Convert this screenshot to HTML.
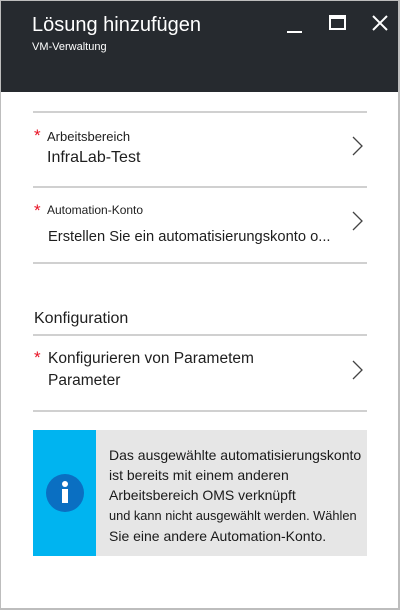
<!DOCTYPE html>
<html><head><meta charset="utf-8"><style>
*{margin:0;padding:0;box-sizing:border-box}
body{width:400px;height:610px;background:#fff;font-family:"Liberation Sans",sans-serif;position:relative;overflow:hidden}
.frame{position:absolute;left:0;top:0;width:400px;height:610px;border:1px solid #bdbdbd;border-right:2px solid #bdbdbd;border-bottom:2px solid #bdbdbd}
.hdr{position:absolute;left:1px;top:1px;width:397px;height:91px;background:#262a2f}
.t{position:absolute;color:#fff}
.line{position:absolute;left:33px;width:334px;height:2px;background:#d0d0d0}
.a{position:absolute;color:#e81123;font-size:17px}
.tx{position:absolute;color:#1e1e1e;white-space:nowrap}
.chev{position:absolute;left:352px;width:12px;height:20px}
</style></head><body>
<div class="frame"></div>
<div class="hdr"></div>
<div class="t" style="left:32px;top:14px;font-size:20px">Lösung hinzufügen</div>
<div class="t" style="left:32px;top:41px;font-size:11px">VM-Verwaltung</div>
<div style="position:absolute;left:287px;top:31px;width:15px;height:2px;background:#fff"></div>
<div style="position:absolute;left:329px;top:15px;width:17px;height:15px;border:2px solid #fff;border-top-width:4px"></div>
<svg style="position:absolute;left:372px;top:15px" width="16" height="16"><path d="M1 1L15 15M15 1L1 15" stroke="#fff" stroke-width="2"/></svg>
<div class="line" style="top:111px"></div>
<div class="a" style="left:34px;top:126px">*</div>
<div class="tx" style="left:47px;top:129px;font-size:13px">Arbeitsbereich</div>
<div class="tx" style="left:47px;top:149px;font-size:16px">InfraLab-Test</div>
<svg class="chev" style="top:136px"><path d="M1 1L10 10L1 19" fill="none" stroke="#444" stroke-width="1.3"/></svg>
<div class="line" style="top:186px"></div>
<div class="a" style="left:34px;top:201px">*</div>
<div class="tx" style="left:47px;top:203px;font-size:12px">Automation-Konto</div>
<div class="tx" style="left:48px;top:229px;font-size:14.7px">Erstellen Sie ein automatisierungskonto o...</div>
<svg class="chev" style="top:211px"><path d="M1 1L10 10L1 19" fill="none" stroke="#444" stroke-width="1.3"/></svg>
<div class="line" style="top:262px"></div>
<div class="tx" style="left:34px;top:310px;font-size:16px">Konfiguration</div>
<div class="line" style="top:334px"></div>
<div class="a" style="left:34px;top:348px">*</div>
<div class="tx" style="left:48px;top:350px;font-size:15.5px">Konfigurieren von Parametem</div>
<div class="tx" style="left:48px;top:372px;font-size:15.5px">Parameter</div>
<svg class="chev" style="top:360px"><path d="M1 1L10 10L1 19" fill="none" stroke="#444" stroke-width="1.3"/></svg>
<div class="line" style="top:410px"></div>
<div style="position:absolute;left:33px;top:430px;width:334px;height:126px;background:#e6e6e6"></div>
<div style="position:absolute;left:33px;top:430px;width:63px;height:126px;background:#00b4f0"></div>
<svg style="position:absolute;left:46px;top:474px" width="38" height="38"><circle cx="19" cy="19" r="19" fill="#0a6fc2"/><circle cx="19" cy="10" r="3" fill="#fff"/><rect x="16" y="15" width="6" height="14" fill="#fff"/></svg>
<div class="tx" style="left:109px;top:445px;font-size:14px;line-height:20px;color:#1a1a1a">Das ausgewählte automatisierungskonto<br>ist bereits mit einem anderen<br>Arbeitsbereich OMS verknüpft<br><span style="font-size:12.8px">und kann nicht ausgewählt werden. Wählen</span><br>Sie eine andere Automation-Konto.</div>
</body></html>
